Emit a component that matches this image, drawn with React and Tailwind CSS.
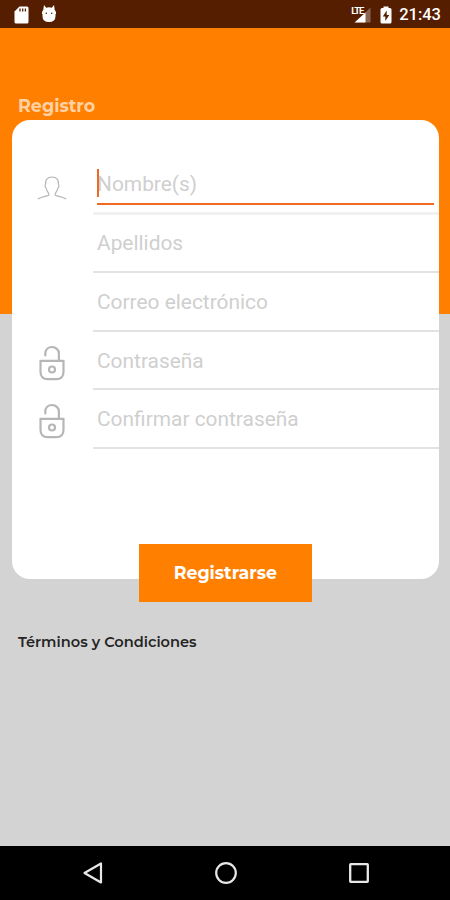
import React from 'react';
import clsx from 'clsx';

const FIELDS = [
  { id: 'name', label: 'Nombre(s)', icon: 'user', focused: true },
  { id: 'surname', label: 'Apellidos' },
  { id: 'email', label: 'Correo electrónico' },
  { id: 'password', label: 'Contraseña', icon: 'lock' },
  { id: 'confirm', label: 'Confirmar contraseña', icon: 'lock' },
];

function UserIcon() {
  return (
    <svg width="30" height="24" viewBox="0 0 30 24" fill="none" stroke="#b4b4b4" strokeWidth="1.2">
      <path d="M.8 23c2.500-1.600 5-2.200 8-2.900 2-.5 3.100-.6 3.200-1.200.2-.8-.4-1.800-1.400-3.200-.9-1.300-1.300-2.500-1.700-4.100-.8-.4-1.200-2.500-.4-3.100C8.100 3.700 10.600 1 15 1s6.900 2.700 6.500 7.500c.8.600.4 2.700-.4 3.100-.4 1.600-.8 2.800-1.700 4.100-1 1.400-1.600 2.400-1.400 3.200.1.600 1.200.7 3.200 1.200 3 .7 5.500 1.300 8 2.900" />
    </svg>
  );
}

function LockIcon() {
  return (
    <svg width="26" height="36" viewBox="0 0 26 36" fill="none" stroke="#b6b6b6" strokeWidth="2.200">
      <path d="M6.300 10.500V8.700C6.300 4.700 9.200 2 13 2s6.900 2.700 6.900 6.700v7.100" strokeLinecap="round" />
      <path d="M1.500 15.800h23v11c0 4.800-2.400 7.400-7.200 7.400H8.700c-4.800 0-7.200-2.600-7.200-7.400z" strokeLinejoin="round" />
      <circle cx="13" cy="24.500" r="3" />
    </svg>
  );
}

function StatusBar() {
  return (
    <header className="flex h-7 shrink-0 items-center bg-[#561e00] pt-px pr-[9px] pl-3.5 text-white">
      <svg width="15" height="18" viewBox="0 0 15 18" fill="#fff">
        <path d="M5.500.5h7.500q1.500 0 1.500 1.500v14q0 1.500-1.500 1.500H2Q.5 17.500.5 16V5.500z" />
        <path d="M6 2.500v3M8.700 2.500v3M11.400 2.500v3" stroke="#561e00" strokeWidth="1.300" />
      </svg>
      <svg className="-mt-0.5 ml-3" width="16" height="18" viewBox="0 0 16 18" fill="#fff">
        <path d="M3 0 5.200 2.800q2.800-1 5.600 0L13 0l.8 5.200V7H2.200V5.200z" />
        <path d="M2.200 5h11.600l1.200 2v2h-.5v2q0 6-6.500 6t-6.500-6V9H1V7z" />
        <circle cx="5.300" cy="8.200" r=".8" fill="#561e00" />
        <circle cx="10.700" cy="8.200" r=".8" fill="#561e00" />
      </svg>
      <div className="relative ml-auto h-[18px] w-[21px]">
        <svg width="21" height="18" viewBox="0 0 21 18">
          <path d="M20.500 1.500v15H5.500z" fill="#8a6652" />
          <path d="M15.500 6.500v10H4.500z" fill="#fff" />
        </svg>
        <span className="absolute top-0 left-px font-['Roboto',sans-serif] text-[9.5px] leading-[9px] font-bold tracking-[-1px]">LTE</span>
      </div>
      <svg className="ml-[9px]" width="12" height="18" viewBox="0 0 12 18">
        <path d="M3.500 2V.5h5V2H10q1.500 0 1.500 1.500V16q0 1.500-1.500 1.500H2Q.5 17.500.5 16V3.500Q.5 2 2 2z" fill="#fff" />
        <path d="M6.700 4.500 2.800 10.500h2.500v4.500l4-6H6.700z" fill="#561e00" />
      </svg>
      <span className="ml-[7px] pt-0.5 font-['Roboto',sans-serif] text-[16.5px] leading-none font-medium">21:43</span>
    </header>
  );
}

function Field({ label, icon, focused }) {
  return (
    <div className={clsx('flex items-stretch', focused ? 'h-[58.2px]' : 'h-[58.6px]')}>
      <div className={clsx('flex w-[81px] items-center justify-center pr-0.5', focused ? 'pt-1.5' : 'pt-[3px]')}>
        {icon === 'user' && <UserIcon />}
        {icon === 'lock' && <LockIcon />}
      </div>
      <div
        className={clsx(
          'flex flex-1 flex-col pr-[5px] pl-1',
          focused ? 'border-b-[3px] border-[#f1f1f1]' : 'border-b-2 border-[#e2e2e2]'
        )}
      >
        <div
          className={clsx(
            "flex items-center font-['Roboto',sans-serif] text-[20.9px] text-[#cfcfcf]",
            focused ? 'mt-2 h-[41px] border-b-2 border-[#f06a24]' : 'h-full pt-0.5'
          )}
        >
          {focused && <span className="relative z-10 -mt-0.5 -mr-0.5 h-7 w-0.5 bg-[#ee6a24]" />}
          <span className={clsx('leading-none', focused && 'mt-0.5')}>{label}</span>
        </div>
      </div>
    </div>
  );
}

function NavBar() {
  return (
    <nav className="flex h-[54px] shrink-0 items-center justify-between bg-black pr-20 pl-[82px]">
      <svg width="22" height="24" viewBox="0 0 22 24" fill="none" stroke="#e8e8e8" strokeWidth="2.200">
        <path d="M19 2.500v19L2.500 12z" strokeLinejoin="round" />
      </svg>
      <svg width="24" height="24" viewBox="0 0 24 24" fill="none" stroke="#e8e8e8" strokeWidth="2.200">
        <circle cx="12" cy="12" r="9.800" />
      </svg>
      <svg width="22" height="22" viewBox="0 0 22 22" fill="none" stroke="#e8e8e8" strokeWidth="2.300">
        <rect x="2.200" y="2.200" width="17.600" height="17.600" rx=".5" />
      </svg>
    </nav>
  );
}

export default function App() {
  return (
    <div className="flex h-[900px] w-[450px] flex-col overflow-hidden bg-[#d3d3d3] font-['Montserrat','Inter',sans-serif]">
      <StatusBar />
      <main className="flex flex-1 flex-col bg-[linear-gradient(#ff7f00_286px,#d3d3d3_286px)] px-3 pt-[66px]">
        <h1 className="ml-1.5 h-[26.4px] pt-px text-[17.5px] leading-[21px] font-bold text-[#ffd1a3]">Registro</h1>
        <form className="h-[458.2px] w-[427.4px] rounded-[18px] bg-white pt-9">
          {FIELDS.map(f => <Field key={f.id} {...f} />)}
        </form>
        <button
          type="button"
          className="relative -mt-[34.3px] ml-[127px] h-[57.4px] w-[172.6px] bg-[#ff7f00] pt-px text-[17.4px] font-bold text-white"
        >
          Registrarse
        </button>
        <a className="mt-[30.2px] ml-1.5 text-[14.6px] leading-[21px] font-semibold text-[#242424]">Términos y Condiciones</a>
      </main>
      <NavBar />
    </div>
  );
}
